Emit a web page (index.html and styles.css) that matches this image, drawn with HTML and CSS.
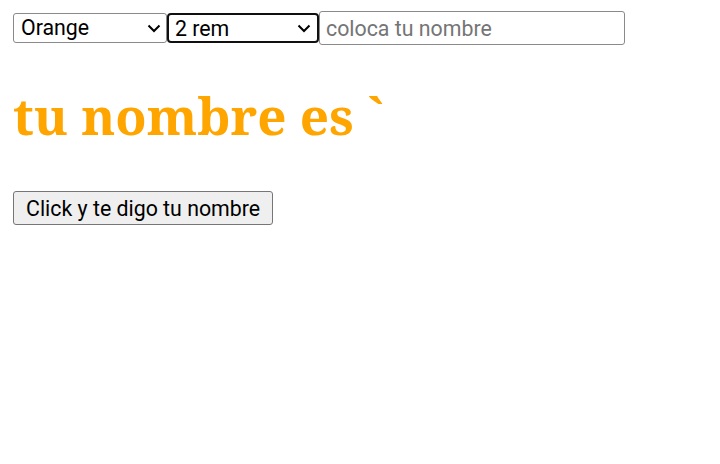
FILE: index.html
```html
<!DOCTYPE html>
<html lang="es">
<head>
<meta charset="utf-8">
<title>Nombre</title>
<link rel="stylesheet" href="styles.css">
</head>
<body>
<div class="controls">
  <select class="ctl sel sel-color">
    <option>Orange</option>
    <option>Red</option>
    <option>Blue</option>
  </select><select class="ctl sel sel-size focused">
    <option>2 rem</option>
    <option>3 rem</option>
  </select><input class="ctl name-input" type="text" placeholder="coloca tu nombre">
</div>
<h1 class="title">tu nombre es `</h1>
<button class="ctl btn">Click y te digo tu nombre</button>
</body>
</html>
```
FILE: styles.css
```css
html, body {
  background: #fff;
}
body {
  margin: 11px 13px 13px 13px;
  font-family: "Noto Serif", "DejaVu Serif", serif;
}
.controls {
  display: flex;
  align-items: center;
  height: 34px;
}
.ctl {
  font-family: Roboto, sans-serif;
  font-size: 21.33px;
  color: #000;
  box-sizing: border-box;
  margin: 0;
}
.sel {
  appearance: none;
  -webkit-appearance: none;
  height: 30px;
  border: 1px solid #8a8a8a;
  border-radius: 3px;
  background-color: #fff;
  background-image: url("data:image/svg+xml;utf8,<svg xmlns='http://www.w3.org/2000/svg' width='14' height='9' viewBox='0 0 14 9'><path d='M1.5 1.5 L7 7 L12.5 1.5' fill='none' stroke='%23000' stroke-width='2'/></svg>");
  background-repeat: no-repeat;
  background-position: right 5px center;
  padding: 0 24px 0 7px;
  line-height: 28px;
}
.sel-color {
  width: 154px;
}
.sel-size {
  width: 152px;
}
.focused {
  border: 2px solid #101010;
  border-radius: 4px;
  padding-left: 6px;
  background-position: right 6px center;
}
.name-input {
  width: 306px;
  height: 34px;
  padding: 1px 6px;
  border: 1px solid #8a8a8a;
  border-radius: 3px;
  outline: none;
  background: #fff;
}
.name-input::placeholder {
  color: #757575;
}
.title {
  color: #ffa500;
  font-size: 51.2px;
  font-weight: bold;
  margin: 38px 0 0 0;
  line-height: 64px;
}
.btn {
  margin-top: 44px;
  height: 34px;
  padding: 0 12px;
  background: #efefef;
  border: 1px solid #767676;
  border-radius: 3px;
}
```
